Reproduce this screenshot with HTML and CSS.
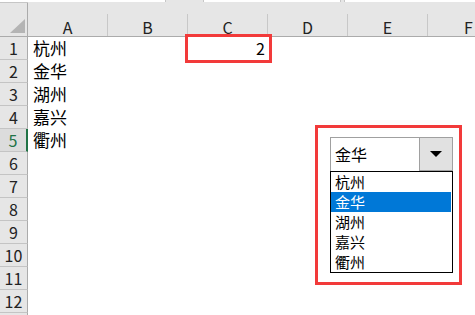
FILE: index.html
```html
<!DOCTYPE html>
<html lang="zh">
<head>
<meta charset="utf-8">
<link rel="stylesheet" href="styles.css">
</head>
<body>
<div class="top">
  <div class="box box-name"></div>
  <div class="box box-mid"></div>
  <div class="box box-formula"></div>
</div>
<div class="sheet">
  <div class="corner"><span class="tri"></span></div>
  <div class="colh"><span>A</span></div>
  <div class="colh"><span>B</span></div>
  <div class="colh"><span>C</span></div>
  <div class="colh"><span>D</span></div>
  <div class="colh"><span>E</span></div>
  <div class="colh last"><span>F</span></div>

  <div class="rowh">1</div><div class="cell">杭州</div><div class="cell"></div><div class="cell num">2</div><div class="cell"></div><div class="cell"></div><div class="cell"></div>
  <div class="rowh">2</div><div class="cell">金华</div><div class="cell"></div><div class="cell"></div><div class="cell"></div><div class="cell"></div><div class="cell"></div>
  <div class="rowh">3</div><div class="cell">湖州</div><div class="cell"></div><div class="cell"></div><div class="cell"></div><div class="cell"></div><div class="cell"></div>
  <div class="rowh">4</div><div class="cell">嘉兴</div><div class="cell"></div><div class="cell"></div><div class="cell"></div><div class="cell"></div><div class="cell"></div>
  <div class="rowh active">5</div><div class="cell">衢州</div><div class="cell"></div><div class="cell"></div><div class="cell"></div><div class="cell"></div><div class="cell"></div>
  <div class="rowh">6</div><div class="cell"></div><div class="cell"></div><div class="cell"></div><div class="cell"></div><div class="cell"></div><div class="cell"></div>
  <div class="rowh">7</div><div class="cell"></div><div class="cell"></div><div class="cell"></div><div class="cell"></div><div class="cell"></div><div class="cell"></div>
  <div class="rowh">8</div><div class="cell"></div><div class="cell"></div><div class="cell"></div><div class="cell"></div><div class="cell"></div><div class="cell"></div>
  <div class="rowh">9</div><div class="cell"></div><div class="cell"></div><div class="cell"></div><div class="cell"></div><div class="cell"></div><div class="cell"></div>
  <div class="rowh">10</div><div class="cell"></div><div class="cell"></div><div class="cell"></div><div class="cell"></div><div class="cell"></div><div class="cell"></div>
  <div class="rowh">11</div><div class="cell"></div><div class="cell"></div><div class="cell"></div><div class="cell"></div><div class="cell"></div><div class="cell"></div>
  <div class="rowh">12</div><div class="cell"></div><div class="cell"></div><div class="cell"></div><div class="cell"></div><div class="cell"></div><div class="cell"></div>
</div>

<div class="mark mark-c1"></div>

<div class="mark mark-combo">
  <div class="combo">
    <div class="combo-text">金华</div>
    <div class="combo-btn"><span class="arrow"></span></div>
  </div>
  <ul class="list">
    <li>杭州</li>
    <li class="sel">金华</li>
    <li>湖州</li>
    <li>嘉兴</li>
    <li>衢州</li>
  </ul>
</div>
</body>
</html>
```

FILE: styles.css
```css
* { box-sizing: border-box; }
html, body {
  margin: 0;
  padding: 0;
  width: 475px;
  height: 315px;
  overflow: hidden;
  background: #ffffff;
  font-family: "Noto Sans CJK SC", "Liberation Sans", sans-serif;
  color: #000;
}
.top {
  height: 3px;
  background: #e6e6e6;
  display: flex;
  border-bottom: 1px solid #c6c6c6;
}
.box {
  height: 2px;
  background: #fff;
  border-left: 1px solid #c6c6c6;
  border-right: 1px solid #c6c6c6;
}
.box-name { width: 166px; border-left: none; }
.box-mid { width: 138px; margin-left: 37px; }
.box-formula { flex: 1; margin-left: 3px; border-right: none; }

.sheet {
  display: grid;
  grid-template-columns: 28px 80px 80px 80px 80px 80px 1fr;
  grid-template-rows: 34px repeat(12, 23px) 2px;
}
.sheet::after {
  content: "";
  grid-column: 1;
  background: #e6e6e6;
  border-right: 1px solid #ababab;
}
.corner {
  background: #e6e6e6;
  border-right: 1px solid #ababab;
  border-bottom: 1px solid #ababab;
  position: relative;
}
.tri {
  position: absolute;
  left: 10px;
  top: 16px;
  width: 0;
  height: 0;
  border-left: 15px solid transparent;
  border-bottom: 14px solid #b4b4b4;
}
.colh {
  background: #e6e6e6;
  border-bottom: 1px solid #ababab;
  display: flex;
  align-items: flex-end;
  margin-top: -1px;
}
.colh span {
  display: block;
  width: 100%;
  height: 22px;
  border-right: 1px solid #c8c8c8;
  text-align: center;
  font-size: 16px;
  line-height: 22px;
  padding-top: 2px;
  color: #222;
}
.colh.last span { border-right: none; text-align: left; padding-left: 36px; }
.rowh {
  background: #e6e6e6;
  border-right: 1px solid #ababab;
  border-bottom: 1px solid #c4c4c4;
  text-align: center;
  font-size: 16px;
  line-height: 23px;
  color: #222;
}
.rowh.active {
  background: #dcdcdc;
  color: #217346;
  border-right: 2px solid #217346;
}
.cell {
  font-size: 17px;
  line-height: 22px;
  padding-left: 5px;
  white-space: nowrap;
}
.cell.num {
  text-align: right;
  padding-right: 3px;
  font-size: 16px;
}

.mark {
  position: absolute;
  border: 3px solid #f23a3a;
}
.mark-c1 {
  left: 185px;
  top: 34px;
  width: 87px;
  height: 29px;
}
.mark-combo {
  left: 315px;
  top: 125px;
  width: 147px;
  height: 160px;
  padding: 9px 6px 9px 12px;
  display: flex;
  flex-direction: column;
}
.combo {
  width: 123px;
  height: 35px;
  border: 1px solid #a0a0a0;
  border-bottom: none;
  display: flex;
  background: #fff;
}
.combo-text {
  flex: 1;
  font-size: 16px;
  line-height: 32px;
  padding-left: 4px;
}
.combo-btn {
  width: 33px;
  background: #e1e1e1;
  border-left: 1px solid #a0a0a0;
  border-bottom: 1px solid #a0a0a0;
  margin-bottom: 1px;
  display: flex;
  align-items: center;
  justify-content: center;
}
.arrow {
  width: 0;
  height: 0;
  border-left: 6px solid transparent;
  border-right: 6px solid transparent;
  border-top: 6px solid #000;
}
.list {
  list-style: none;
  margin: -1px 0 0 0;
  padding: 0;
  width: 123px;
  height: 102px;
  border: 1px solid #000;
  background: #fff;
}
.list li {
  height: 20px;
  font-size: 15px;
  line-height: 20px;
  padding-left: 4px;
  margin-right: 1px;
}
.list li.sel {
  background: #0078d7;
  color: #fff;
}
```
